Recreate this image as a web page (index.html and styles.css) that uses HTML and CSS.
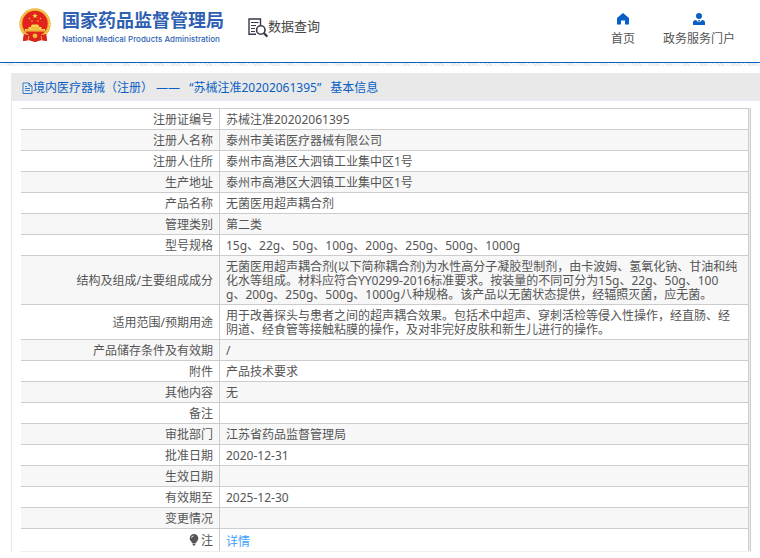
FILE: index.html
```html
<!DOCTYPE html>
<html lang="zh-CN">
<head>
<meta charset="utf-8">
<title>国家药品监督管理局 数据查询</title>
<link rel="stylesheet" href="styles.css">
</head>
<body>
<header class="header">
  <div class="brand">
    <svg class="emblem" viewBox="0 0 32 34" aria-hidden="true">
      <path d="M5 25 L4 33 L10 32 L16 34 L22 32 L28 33 L27 25Z" fill="#d9231c"/>
      <circle cx="16" cy="16" r="15.7" fill="#edb63c"/>
      <circle cx="16" cy="16" r="14.4" fill="none" stroke="#f6d768" stroke-width="1" stroke-dasharray="2 1"/>
      <circle cx="16" cy="15.500" r="12.700" fill="#e3221b"/>
      <path d="M16 5l.8 1.900 2 .1-1.600 1.300.6 2-1.800-1.200-1.800 1.200.6-2L13.200 7l2-.1z" fill="#f8d54c"/>
      <g fill="#f3bd38"><circle cx="10.500" cy="10.500" r=".8"/><circle cx="13" cy="13" r=".8"/><circle cx="19" cy="13" r=".8"/><circle cx="21.500" cy="10.500" r=".8"/></g>
      <path d="M12 18l1-1.500h6l1 1.500v1h2.500v2H26v2.500H6V21h3.500v-2H12z" fill="#f8d54c"/>
      <path d="M7 22.300h18M12 20h8" stroke="#dd7a26" stroke-width=".6"/>
      <path d="M5 26q6 2 8 0l3-1 3 1q2 2 8 0l1 7-6-1-6 2-6-2-6 1z" fill="#d9231c"/>
      <circle cx="16" cy="27.800" r="2.400" fill="#f0b93a"/>
      <path d="M10 28l-1 4M22 28l1 4" stroke="#efae36" stroke-width="1"/>
    </svg>
    <div class="brand-text">
      <span class="brand-cn">国家药品监督管理局</span>
      <span class="brand-en">National Medical Products Administration</span>
    </div>
  </div>
  <div class="section">
    <svg class="section-icon" viewBox="0 0 20 20" fill="none" stroke="#39374b" aria-hidden="true">
      <path d="M8 16.200H1V1h11.500v6" stroke-width="1.400"/>
      <path d="M3 4.500h7.500M3 7.500h5M3 10.500h4M3 13.500h4" stroke-width="1"/>
      <circle cx="12.800" cy="12" r="4.200" stroke-width="1.600"/>
      <path d="M15.800 15l3.500 3.700" stroke-width="2.200"/>
    </svg>
    <span>数据查询</span>
  </div>
  <nav class="nav">
    <a class="nav-link" href="#">
      <svg class="nav-icon" viewBox="0 0 12 12" aria-hidden="true"><path d="M6 0L12 5v6.500H8V7.500H4v4H0V5z" fill="#0a5fc4"/></svg>
      <span>首页</span>
    </a>
    <a class="nav-link" href="#">
      <svg class="nav-icon" viewBox="0 0 12 12" fill="#0a5fc4" aria-hidden="true"><circle cx="6" cy="3" r="3"/><path d="M0 12V9.500Q0 7 3 7l3 3 3-3q3 0 3 2.500V12z"/><path d="M5 7h2l-.5 1.200.5 2L6 11.300 5 10.200l.5-2z"/></svg>
      <span>政务服务门户</span>
    </a>
  </nav>
</header>
<div class="hatch"></div>
<main class="panel">
  <h1 class="panel-title">
    <svg class="doc-icon" viewBox="0 0 11 12" fill="none" stroke="#0a5fc4" stroke-width=".8" aria-hidden="true"><path d="M1 1h6l3 3v7.500H1zM7 1v3h3M3 4.500h2M3 6.500h5M3 8.500h5"/></svg>
    <span>境内医疗器械（注册） ——</span>
    <span class="quoted">“苏械注准20202061395”</span>
    <span>基本信息</span>
  </h1>
  <div class="table-wrap">
    <table class="info">
      <tbody>
        <tr><th scope="row">注册证编号</th><td>苏械注准20202061395</td></tr>
        <tr><th scope="row">注册人名称</th><td>泰州市美诺医疗器械有限公司</td></tr>
        <tr><th scope="row">注册人住所</th><td>泰州市高港区大泗镇工业集中区1号</td></tr>
        <tr><th scope="row">生产地址</th><td>泰州市高港区大泗镇工业集中区1号</td></tr>
        <tr><th scope="row">产品名称</th><td>无菌医用超声耦合剂</td></tr>
        <tr><th scope="row">管理类别</th><td>第二类</td></tr>
        <tr><th scope="row">型号规格</th><td>15g、22g、50g、100g、200g、250g、500g、1000g</td></tr>
        <tr><th scope="row">结构及组成/主要组成成分</th><td>无菌医用超声耦合剂(以下简称耦合剂)为水性高分子凝胶型制剂，由卡波姆、氢氧化钠、甘油和纯化水等组成。材料应符合YY0299-2016标准要求。按装量的不同可分为15g、22g、50g、100<br>g、200g、250g、500g、1000g八种规格。该产品以无菌状态提供，经辐照灭菌，应无菌。</td></tr>
        <tr><th scope="row">适用范围/预期用途</th><td>用于改善探头与患者之间的超声耦合效果。包括术中超声、穿刺活检等侵入性操作，经直肠、经阴道、经食管等接触粘膜的操作，及对非完好皮肤和新生儿进行的操作。</td></tr>
        <tr><th scope="row">产品储存条件及有效期</th><td>/</td></tr>
        <tr><th scope="row">附件</th><td>产品技术要求</td></tr>
        <tr><th scope="row">其他内容</th><td>无</td></tr>
        <tr><th scope="row">备注</th><td></td></tr>
        <tr><th scope="row">审批部门</th><td>江苏省药品监督管理局</td></tr>
        <tr><th scope="row">批准日期</th><td>2020-12-31</td></tr>
        <tr><th scope="row">生效日期</th><td></td></tr>
        <tr><th scope="row">有效期至</th><td>2025-12-30</td></tr>
        <tr><th scope="row">变更情况</th><td></td></tr>
        <tr class="note"><th scope="row"><svg class="bulb" viewBox="0 0 10 12" aria-hidden="true"><path d="M5 0a4.300 4.300 0 0 1 2.600 7.700L7 9H3l-.6-1.300A4.300 4.300 0 0 1 5 0zM3.300 9.600h3.400L6 11.500H4z" fill="#555"/><path d="M2.500 4Q2.700 2.200 4.500 2" fill="none" stroke="#fff" stroke-width=".8"/></svg>注</th><td><a class="detail" href="#">详情</a></td></tr>
      </tbody>
    </table>
  </div>
</main>
</body>
</html>
```
FILE: styles.css
```css
* {
  box-sizing: border-box;
}

body {
  margin: 0;
  background: #fff;
  color: #555;
  font: 12px/14px "Noto Sans", "Noto Sans CJK SC", sans-serif;
}

a {
  text-decoration: none;
}

.header {
  display: flex;
  align-items: flex-start;
  height: 63px;
  padding: 8px 25px 0 19px;
  border-bottom: 1px solid #0a5fc4;
}

.brand {
  display: flex;
  gap: 11px;
}

.emblem {
  width: 32px;
  height: 34px;
}

.brand-text {
  display: flex;
  flex-direction: column;
  gap: 2px;
  color: #2f5fb3;
  white-space: nowrap;
}

.brand-cn {
  font: 700 18px/23px "Noto Sans CJK SC", sans-serif;
}

.brand-en {
  font: 500 8px/12px Inter, sans-serif;
}

.section {
  display: flex;
  align-items: flex-start;
  margin: 8px 0 0 24px;
  color: #444;
  font-size: 13px;
  line-height: 20px;
}

.section-icon {
  width: 20px;
  height: 20px;
  margin-top: 2px;
}

.nav {
  display: flex;
  gap: 28px;
  margin-left: auto;
  padding-top: 5px;
}

.nav-link {
  display: flex;
  flex-direction: column;
  align-items: center;
  gap: 7px;
  color: #555;
}

.nav-icon {
  width: 12px;
  height: 12px;
}

.hatch {
  height: 3px;
  background: repeating-linear-gradient(45deg, #fff 0 1px, #e6e6e6 1px 2px);
}

.panel {
  margin: 7px 0 0 11px;
  border-left: 1px solid #e9e9e9;
}

.panel-title {
  display: flex;
  align-items: center;
  height: 28px;
  margin: 0;
  padding: 2px 0 0 10px;
  border-bottom: 1px solid #e6eaf4;
  background: #e9e9e9;
  color: #0a5fc4;
  font-size: 12px;
  font-weight: 400;
  white-space: nowrap;
}

.doc-icon {
  width: 11px;
  height: 12px;
}

.quoted {
  margin: 0 9px;
}

.table-wrap {
  margin: 7px 9px 0;
  padding-right: 1px;
  border-right: 1px solid #ccc;
  border-bottom: 1px solid #eee;
  background: #eee;
}

.info {
  width: 100%;
  border-spacing: 0;
  border-right: 1px solid #ccc;
  background: #fff;
}

.info th,
.info td {
  padding: 4px 6px 2px;
  border-top: 1px solid #ccc;
  height: 21px;
  vertical-align: middle;
}

.info th {
  width: 199px;
  border-right: 1px solid #ccc;
  font-weight: 400;
  text-align: right;
}

.info td {
  padding-right: 9px;
  word-break: break-all;
}

.info tr:nth-child(even) {
  background: #f7f7f7;
}

.info .note td {
  padding-top: 6px;
}

.bulb {
  width: 10px;
  height: 12px;
  margin-right: 2px;
  vertical-align: -1px;
}

.detail {
  color: #409eff;
}
```
